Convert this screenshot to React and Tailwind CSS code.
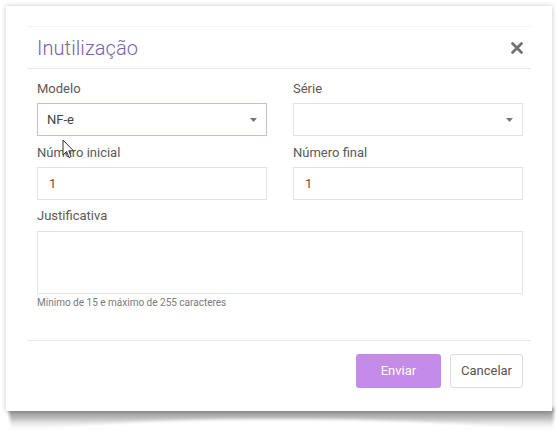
import React from "react";

function Caret() {
  return (
    <svg width="7" height="4" viewBox="0 0 7 4" className="shrink-0">
      <path d="M0 0 L7 0 L3.5 4 Z" fill="#777" />
    </svg>
  );
}

function Label({ children }) {
  return <div className="h-4 leading-4 text-[13px] text-[#5a5a5a]">{children}</div>;
}

export default function App() {
  return (
    <div
      className="relative w-[557px] h-[434px] bg-white overflow-hidden"
      style={{ fontFamily: "Roboto, 'Noto Sans', sans-serif" }}
    >
      {/* curled bottom shadow */}
      <svg className="absolute left-0 top-[404px]" width="557" height="30" viewBox="0 0 557 30">
        <defs>
          <linearGradient id="sg" x1="0" y1="0" x2="0" y2="1">
            <stop offset="0" stopColor="#8a8a8a" />
            <stop offset="0.45" stopColor="#bdbdbd" />
            <stop offset="1" stopColor="#ffffff" stopOpacity="0" />
          </linearGradient>
          <filter id="bl" x="-5%" y="-50%" width="110%" height="200%">
            <feGaussianBlur stdDeviation="1.6" />
          </filter>
        </defs>
        <path
          d="M8 4 L554 4 L553 27 Q420 14 280 15 Q140 14 12 27 Z"
          fill="url(#sg)"
          filter="url(#bl)"
        />
      </svg>

      <div className="absolute left-[6px] top-[6px] w-[546px] h-[405px] bg-white shadow-[0_0_5px_rgba(0,0,0,0.22)] px-[21px] flex flex-col">
        {/* header */}
        <div className="mt-[20px] h-[43px] border-t border-t-[#f3f4ea] border-b border-b-[#e8e8e8] flex items-center justify-between pl-[10px] pr-[8px]">
          <div className="text-[20px] leading-6 text-[#7a62a6] font-light tracking-[0.1px]">Inutilização</div>
          <svg width="12" height="12" viewBox="0 0 12 12">
            <path d="M1.5 1.5 L10.5 10.5 M10.5 1.5 L1.5 10.5" stroke="#6e6e6e" strokeWidth="2.6" strokeLinecap="round" />
          </svg>
        </div>

        {/* body */}
        <div className="pl-[10px] pr-[8px] pt-[12px] flex flex-col">
          <div className="grid grid-cols-2 gap-x-[26px]">
            <div className="flex flex-col gap-[6px]">
              <Label>Modelo</Label>
              <div className="h-[33px] border border-[#cbbcdc] flex items-center justify-between pl-[9px] pr-[9px] text-[13px] text-[#444]">
                <span>NF-e</span>
                <Caret />
              </div>
            </div>
            <div className="flex flex-col gap-[6px]">
              <Label>Série</Label>
              <div className="h-[33px] border border-[#e2e2e2] flex items-center justify-end pr-[9px]">
                <Caret />
              </div>
            </div>
          </div>

          <div className="grid grid-cols-2 gap-x-[26px] mt-[9px]">
            <div className="flex flex-col gap-[6px]">
              <Label>Número inicial</Label>
              <div className="h-[33px] border border-[#e2e2e2] flex items-center pl-[11px] text-[13px] text-[#555]">1</div>
            </div>
            <div className="flex flex-col gap-[6px]">
              <Label>Número final</Label>
              <div className="h-[33px] border border-[#e2e2e2] flex items-center pl-[11px] text-[13px] text-[#555]">1</div>
            </div>
          </div>

          <div className="flex flex-col gap-[7px] mt-[8px]">
            <Label>Justificativa</Label>
            <div className="h-[63px] border border-[#e2e2e2]" />
          </div>
          <div className="mt-[3px] h-3 leading-3 text-[10px] text-[#7a7a7a]">Mínimo de 15 e máximo de 255 caracteres</div>
        </div>

        {/* footer */}
        <div className="mt-[31px] border-t border-t-[#e8e8e8] flex justify-end gap-[9px] pt-[13px] pr-[8px]">
          <div className="w-[85px] h-[34px] rounded-[3px] bg-[#c58be9] text-white text-[13px] flex items-center justify-center">Enviar</div>
          <div className="w-[73px] h-[34px] rounded-[3px] border border-[#dcdcdc] bg-white text-[#555] text-[13px] flex items-center justify-center">Cancelar</div>
        </div>
      </div>

      {/* mouse cursor */}
      <svg className="absolute left-[62px] top-[139px]" width="13" height="20" viewBox="0 0 13 20">
        <path d="M1 1 L1 16 L4.5 12.5 L7 18.5 L9.2 17.6 L6.8 11.8 L11.5 11.8 Z" fill="#fff" stroke="#333" strokeWidth="1" strokeLinejoin="round" />
      </svg>
    </div>
  );
}
